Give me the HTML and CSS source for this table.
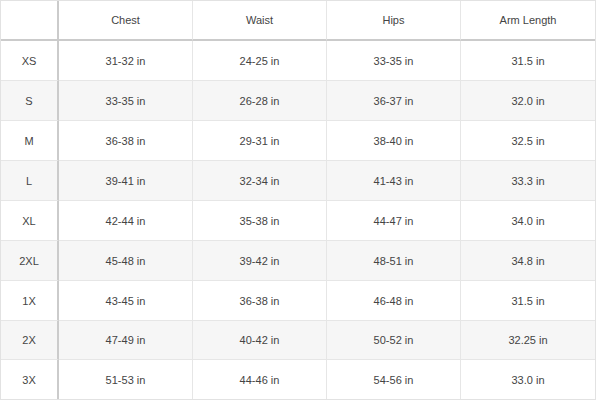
FILE: index.html
```html
<!DOCTYPE html>
<html lang="en">
<head>
<meta charset="utf-8">
<title>Size Chart</title>
<link rel="stylesheet" href="styles.css">
</head>
<body>
<div class="chart">
  <div class="cell head corner"></div>
  <div class="cell head">Chest</div>
  <div class="cell head">Waist</div>
  <div class="cell head">Hips</div>
  <div class="cell head last">Arm Length</div>

  <div class="cell size">XS</div><div class="cell">31-32 in</div><div class="cell">24-25 in</div><div class="cell">33-35 in</div><div class="cell last">31.5 in</div>
  <div class="cell size alt">S</div><div class="cell alt">33-35 in</div><div class="cell alt">26-28 in</div><div class="cell alt">36-37 in</div><div class="cell alt last">32.0 in</div>
  <div class="cell size">M</div><div class="cell">36-38 in</div><div class="cell">29-31 in</div><div class="cell">38-40 in</div><div class="cell last">32.5 in</div>
  <div class="cell size alt">L</div><div class="cell alt">39-41 in</div><div class="cell alt">32-34 in</div><div class="cell alt">41-43 in</div><div class="cell alt last">33.3 in</div>
  <div class="cell size">XL</div><div class="cell">42-44 in</div><div class="cell">35-38 in</div><div class="cell">44-47 in</div><div class="cell last">34.0 in</div>
  <div class="cell size alt">2XL</div><div class="cell alt">45-48 in</div><div class="cell alt">39-42 in</div><div class="cell alt">48-51 in</div><div class="cell alt last">34.8 in</div>
  <div class="cell size">1X</div><div class="cell">43-45 in</div><div class="cell">36-38 in</div><div class="cell">46-48 in</div><div class="cell last">31.5 in</div>
  <div class="cell size alt">2X</div><div class="cell alt">47-49 in</div><div class="cell alt">40-42 in</div><div class="cell alt">50-52 in</div><div class="cell alt last">32.25 in</div>
  <div class="cell size end">3X</div><div class="cell end">51-53 in</div><div class="cell end">44-46 in</div><div class="cell end">54-56 in</div><div class="cell end last">33.0 in</div>
</div>
</body>
</html>
```

FILE: styles.css
```css
* { box-sizing: border-box; }

html, body {
  margin: 0;
  padding: 0;
  background: #ffffff;
  overflow: hidden;
}

.chart {
  width: 596px;
  height: 400px;
  border: 1px solid #e2e2e2;
  display: grid;
  grid-template-columns: 58px repeat(4, 1fr);
  grid-template-rows: 40px repeat(7, 40px) 39px 1fr;
  font-family: "Liberation Sans", Arial, sans-serif;
  font-size: 11px;
  color: #444444;
}

.cell {
  display: flex;
  align-items: center;
  justify-content: center;
  border-right: 1px solid #e6e6e6;
  border-bottom: 1px solid #e6e6e6;
  background: #ffffff;
}

.cell.alt { background: #f6f6f6; }

.cell.head { border-bottom: 2px solid #cbcbcb; }

.cell.size,
.cell.corner { border-right: 2px solid #cbcbcb; }

.cell.last { border-right: none; }

.cell.end { border-bottom: none; }
```
